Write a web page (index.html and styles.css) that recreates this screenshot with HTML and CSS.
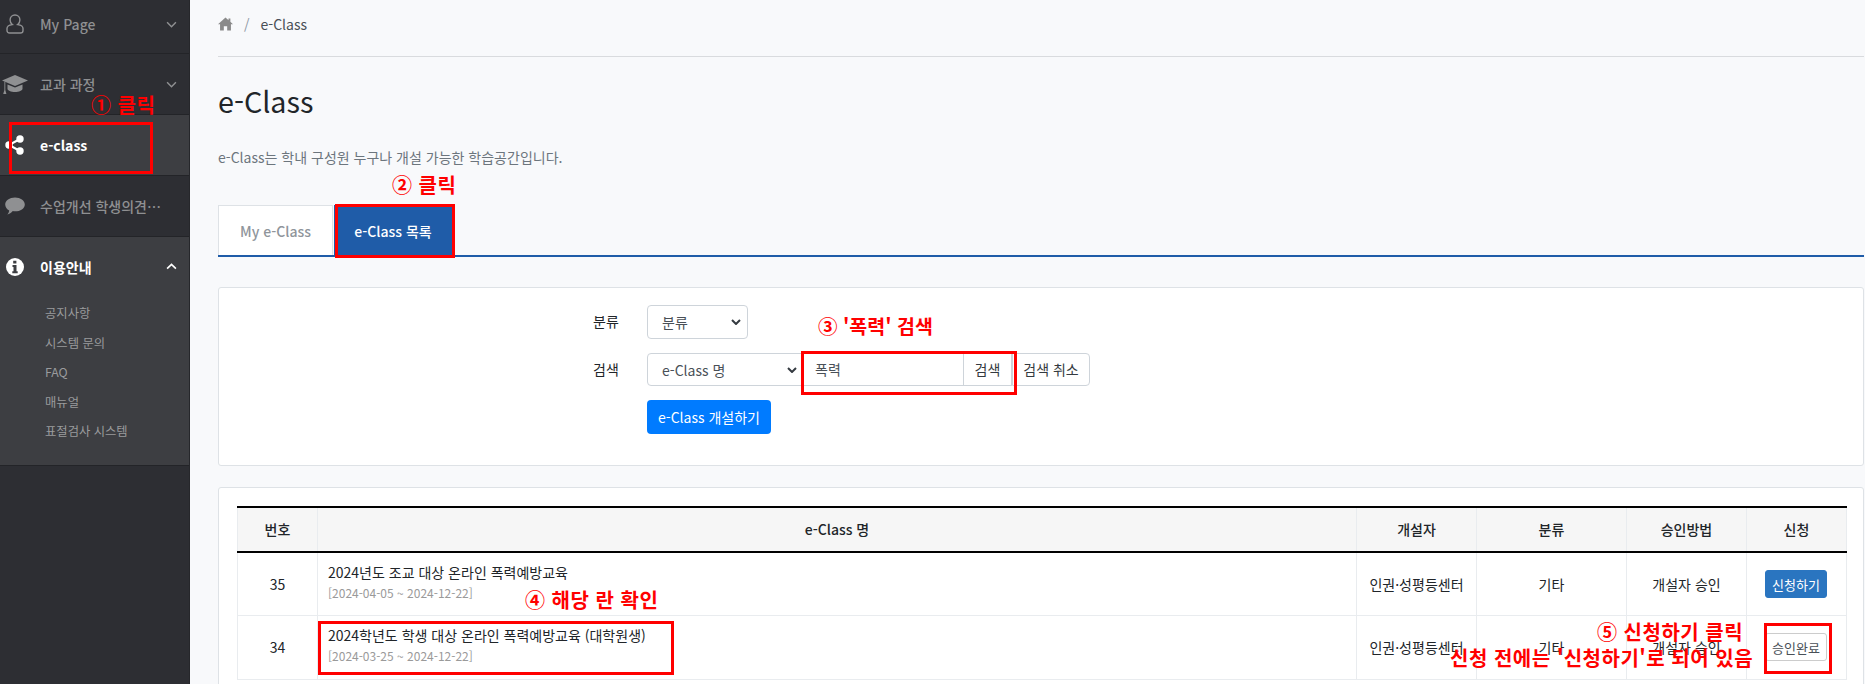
FILE: index.html
```html
<!DOCTYPE html>
<html lang="ko">
<head>
<meta charset="utf-8">
<title>e-Class</title>
<link rel="stylesheet" href="styles.css">
</head>
<body>
<div class="app">
  <aside class="sidebar">
    <div class="nav-item first">
      <svg class="nav-icon person" viewBox="0 0 18 20"><path d="M9 1c2.900 0 4.900 2.300 4.900 5.100 0 1.900-.9 3.500-2.200 4.500 2.900.4 5.300 1.500 5.300 3.900v1.900c0 1.600-1 2.600-2.600 2.600H3.600C2 19 1 18 1 16.400v-1.900c0-2.400 2.400-3.500 5.300-3.900C5 9.600 4.100 8 4.100 6.100 4.100 3.300 6.100 1 9 1z" fill="none" stroke="currentColor" stroke-width="1.400"/></svg>
      <span class="nav-label">My Page</span>
      <svg class="chev" viewBox="0 0 10 6"><path d="M1 1l4 4 4-4" fill="none" stroke="currentColor" stroke-width="1.300"/></svg>
    </div>
    <div class="nav-item">
      <svg class="nav-icon wide" viewBox="0 0 28 20"><path d="M14 1l13 5.500L14 12 1 6.500z" fill="currentColor"/><path d="M6.500 10.500v4.300c0 1.900 3.500 3.200 7.500 3.200s7.500-1.300 7.500-3.200v-4.300L14 13.600z" fill="currentColor"/><path d="M3.400 7.500v8.500l-1.200 4h3.200l-1.100-4V8z" fill="currentColor"/></svg>
      <span class="nav-label">교과 과정</span>
      <svg class="chev" viewBox="0 0 10 6"><path d="M1 1l4 4 4-4" fill="none" stroke="currentColor" stroke-width="1.300"/></svg>
    </div>
    <div class="nav-item active">
      <svg class="nav-icon" viewBox="0 0 20 20"><circle cx="4" cy="10" r="3.700" fill="currentColor"/><circle cx="15" cy="4" r="3.700" fill="currentColor"/><circle cx="15" cy="16" r="3.700" fill="currentColor"/><path d="M4 10l11-6M4 10l11 6" stroke="currentColor" stroke-width="2"/></svg>
      <span class="nav-label">e-class</span>
    </div>
    <div class="nav-item">
      <svg class="nav-icon" viewBox="0 0 20 18"><path d="M10 .5c5.400 0 9.800 2.900 9.800 6.900s-4.400 6.900-9.800 6.900c-.8 0-1.500-.1-2.200-.2C6.300 15.800 4.300 17.300 2.300 17.500c1-1.200 1.800-2.600 1.900-4.100C1.900 12.200.2 10 .2 7.400.2 3.400 4.600.5 10 .5z" fill="currentColor"/></svg>
      <span class="nav-label">수업개선 학생의견…</span>
    </div>
    <div class="nav-group">
      <div class="nav-item open">
        <svg class="nav-icon" viewBox="0 0 20 20"><circle cx="10" cy="10" r="9" fill="currentColor"/><path d="M8.200 3.800h3.200v2.700H8.200zM7.500 8h4v6.200h1.200v2H7.300v-2h1.200V10H7.500z" fill="#3d3e42"/></svg>
        <span class="nav-label">이용안내</span>
        <svg class="chev" viewBox="0 0 10 6"><path d="M1 5l4-4 4 4" fill="none" stroke="currentColor" stroke-width="1.500"/></svg>
      </div>
      <ul class="subnav">
        <li>공지사항</li>
        <li>시스템 문의</li>
        <li>FAQ</li>
        <li>매뉴얼</li>
        <li>표절검사 시스템</li>
      </ul>
    </div>
  </aside>

  <main class="main">
    <nav class="crumb">
      <svg class="home" viewBox="0 0 16 14"><path d="M8 0L0 7.300h2.200V14h4v-4.500h3.600V14h4V7.300H16l-2.800-2.600V1h-2v1.900z" fill="currentColor"/></svg>
      <span class="crumb-sep">/</span>
      <span>e-Class</span>
    </nav>
    <h1 class="title">e-Class</h1>
    <p class="lead">e-Class는 학내 구성원 누구나 개설 가능한 학습공간입니다.</p>

    <div class="tabs">
      <div class="tab">My e-Class</div>
      <div class="tab current">e-Class 목록</div>
    </div>

    <section class="card search-card">
      <div class="form-row">
        <label class="form-label">분류</label>
        <div class="fake-select small"><span>분류</span><svg class="caret" viewBox="0 0 10 6"><path d="M1 1l4 4 4-4" fill="none" stroke="currentColor" stroke-width="2"/></svg></div>
      </div>
      <div class="form-row">
        <label class="form-label">검색</label>
        <div class="input-group">
          <div class="fake-select big"><span>e-Class 명</span><svg class="caret" viewBox="0 0 10 6"><path d="M1 1l4 4 4-4" fill="none" stroke="currentColor" stroke-width="2"/></svg></div>
          <div class="fake-input">폭력</div>
          <button class="btn-plain">검색</button>
          <button class="btn-plain last">검색 취소</button>
        </div>
      </div>
      <div class="form-row">
        <span class="form-label"></span>
        <button class="btn-primary">e-Class 개설하기</button>
      </div>
    </section>

    <section class="card table-card">
      <table class="grid">
        <colgroup>
          <col class="c-no"><col><col class="c-own"><col class="c-cat"><col class="c-app"><col class="c-req">
        </colgroup>
        <thead>
          <tr><th>번호</th><th>e-Class 명</th><th>개설자</th><th>분류</th><th>승인방법</th><th>신청</th></tr>
        </thead>
        <tbody>
          <tr>
            <td>35</td>
            <td class="name"><div class="course">2024년도 조교 대상 온라인 폭력예방교육</div><div class="period">[2024-04-05 ~ 2024-12-22]</div></td>
            <td>인권·성평등센터</td><td>기타</td><td>개설자 승인</td>
            <td><button class="btn-apply">신청하기</button></td>
          </tr>
          <tr>
            <td>34</td>
            <td class="name"><div class="course">2024학년도 학생 대상 온라인 폭력예방교육 (대학원생)</div><div class="period">[2024-03-25 ~ 2024-12-22]</div></td>
            <td>인권·성평등센터</td><td>기타</td><td>개설자 승인</td>
            <td><button class="btn-done">승인완료</button></td>
          </tr>
        </tbody>
      </table>
    </section>
  </main>
</div>

<div class="mark box-1"></div>
<div class="mark box-2"></div>
<div class="mark box-3"></div>
<div class="mark box-4"></div>
<div class="mark box-5"></div>
<div class="note note-1">① 클릭</div>
<div class="note note-2">② 클릭</div>
<div class="note note-3">③ '폭력' 검색</div>
<div class="note note-4">④ 해당 란 확인</div>
<div class="note note-5">⑤ 신청하기 클릭</div>
<div class="note note-6">신청 전에는 '신청하기'로 되어 있음</div>
</body>
</html>
```
FILE: styles.css
```css
* { box-sizing: border-box; }
html, body { margin: 0; height: 684px; overflow: hidden; }
body {
  font-family: "Noto Sans CJK KR", "Noto Sans", sans-serif;
  font-size: 14px;
  color: #212529;
  background: #f8f9fb;
  position: relative;
}
.app { display: flex; height: 684px; overflow: hidden; }

.sidebar { width: 190px; flex: none; background: #2d2e33; color: #8f9092; border-right: 1px solid #26272b; }
.nav-item {
  display: flex;
  align-items: center;
  height: 61px;
  padding: 0 11px 0 0;
  border-bottom: 1px solid #232428;
  font-size: 14px;
  font-weight: 500;
}
.nav-item.first { height: 54px; padding-bottom: 5px; }
.nav-icon { width: 20px; height: 20px; margin-left: 5px; margin-right: 15px; flex: none; }
.nav-icon.person { width: 18px; height: 20px; margin-left: 6px; margin-right: 16px; }
.nav-icon.wide { width: 28px; height: 20px; margin-left: 1px; margin-right: 11px; }
.nav-label { flex: 1; white-space: nowrap; font-size: 14px; }
.chev { width: 11px; height: 7px; flex: none; margin-right: 1px; }
.nav-item.active { background: #3d3e42; color: #fff; font-weight: 700; }
.nav-group { background: #3d3e42; border-bottom: 1px solid #232428; height: 229px; }
.nav-item.open { color: #fff; font-weight: 700; border-bottom: 0; height: 59px; }
.subnav { list-style: none; margin: 0; padding: 3px 0 0 45px; font-size: 12.300px; color: #9a9b9d; }
.subnav li { height: 29.500px; line-height: 29.500px; }

.main { flex: 1; min-width: 0; padding: 0 1px 0 28px; }
.crumb {
  display: flex;
  align-items: center;
  height: 57px;
  border-bottom: 1px solid #d9dbde;
  font-size: 14px;
  color: #495057;
  padding-bottom: 8px;
}
.home { width: 15px; height: 14px; color: #8a8a8a; }
.crumb-sep { color: #8e9aa6; margin: 0 11px; }
.title { margin: 24px 0 0; font-size: 28.700px; font-weight: 400; line-height: 40px; color: #212529; }
.lead { margin: 26px 0 0; font-size: 14px; line-height: 20px; color: #6c757d; }

.tabs { display: flex; margin-top: 38px; height: 52px; border-bottom: 2px solid #1f5ca8; }
.tab {
  display: flex; align-items: center; justify-content: center;
  height: 50px;
  font-size: 14px;
  font-weight: 500;
  color: #8f959b;
  background: #fff;
  border: 1px solid #dee2e6;
  border-bottom: 0;
  width: 115px;
}
.tab.current { background: #1f5ca8; color: #fff; border-color: #1f5ca8; width: 119px; margin-left: 1px; padding-right: 1px; }

.card { background: #fff; border: 1px solid #dee2e6; border-radius: 3px; }
.search-card { margin-top: 30px; height: 179px; padding: 17px 0 0 374px; }
.form-row { display: flex; align-items: center; margin-bottom: 14px; }
.form-label { width: 54px; flex: none; font-size: 14px; padding-bottom: 2px; }
.fake-select {
  display: flex; align-items: center; justify-content: space-between;
  height: 34px; padding: 0 6px 0 14px;
  background: #fff; border: 1px solid #ced4da; border-radius: 4px;
  font-size: 14px; color: #495057;
}
.fake-select.small { width: 101px; }
.fake-select.big { width: 157px; border-radius: 4px 0 0 4px; }
.caret { width: 10px; height: 6px; color: #343a40; }
.input-group { display: flex; height: 33px; }
.input-group .fake-select { height: 33px; }
.fake-input {
  width: 160px; padding: 0 11px 2px; display: flex; align-items: center;
  border: 1px solid #ced4da; border-left: 0; font-size: 14px; color: #495057;
}
.btn-plain {
  font: inherit; font-size: 14px; color: #343a40; padding: 0 0 2px;
  background: #fff; border: 1px solid #ced4da; border-left: 0; width: 48px;
}
.btn-plain.last { border-radius: 0 4px 4px 0; width: 78px; margin-left: 0; border-left: 1px solid #ced4da; }
.btn-primary {
  font: inherit; font-size: 14px; color: #fff; background: #007bff;
  border: 0; border-radius: 4px; height: 34px; width: 124px; padding: 0;
}

.table-card { margin-top: 21px; padding: 18px 16px 18px 18px; height: 300px; }
.grid { width: 100%; table-layout: fixed; border-collapse: collapse; font-size: 14px; }
.c-no { width: 80px; }
.c-own { width: 120px; }
.c-cat { width: 150px; }
.c-app { width: 120px; }
.c-req { width: 100px; }
.grid th {
  height: 45px; font-weight: 500; background: #f6f6f6; padding: 0 0 2px;
  border-top: 2px solid #000; border-bottom: 2px solid #000;
  border-left: 1px solid #e9ecef; border-right: 1px solid #e9ecef;
}
.grid td {
  height: 63.500px; text-align: center; padding: 0;
  border: 1px solid #e9ecef; background: #fff;
}
.grid td.name { text-align: left; padding: 0 0 5px 10px; }
.course { line-height: 20px; }
.period { margin-top: 2px; font-size: 12px; line-height: 18px; color: #9a9a9a; }
.btn-apply, .btn-done {
  font: inherit; font-size: 13px; width: 62px; height: 28px; padding: 0; border-radius: 3px; display: block; margin: 0 0 0 18px;
}
.btn-apply { background: #2a75c0; color: #fff; border: 1px solid #2a75c0; }
.btn-done { background: #fff; color: #495057; border: 1px solid #ccc; }

.mark { position: absolute; border: 3px solid #f00; }
.box-1 { left: 9px; top: 122px; width: 144px; height: 52px; }
.box-2 { left: 335px; top: 204px; width: 120px; height: 54px; }
.box-3 { left: 801px; top: 351px; width: 216px; height: 44px; }
.box-4 { left: 318px; top: 621px; width: 356px; height: 54px; }
.box-5 { left: 1764px; top: 623px; width: 68px; height: 51px; }
.note { position: absolute; color: #f00; font-weight: 700; font-size: 20px; letter-spacing: .5px; line-height: 24px; white-space: nowrap; }
.note-1 { left: 91px; top: 93px; }
.note-2 { left: 392px; top: 173px; }
.note-3 { left: 818px; top: 314px; font-size: 19.500px; letter-spacing: 0; }
.note-4 { left: 525px; top: 588px; }
.note-5 { left: 1597px; top: 620px; }
.note-6 { left: 1450px; top: 646px; }
```
